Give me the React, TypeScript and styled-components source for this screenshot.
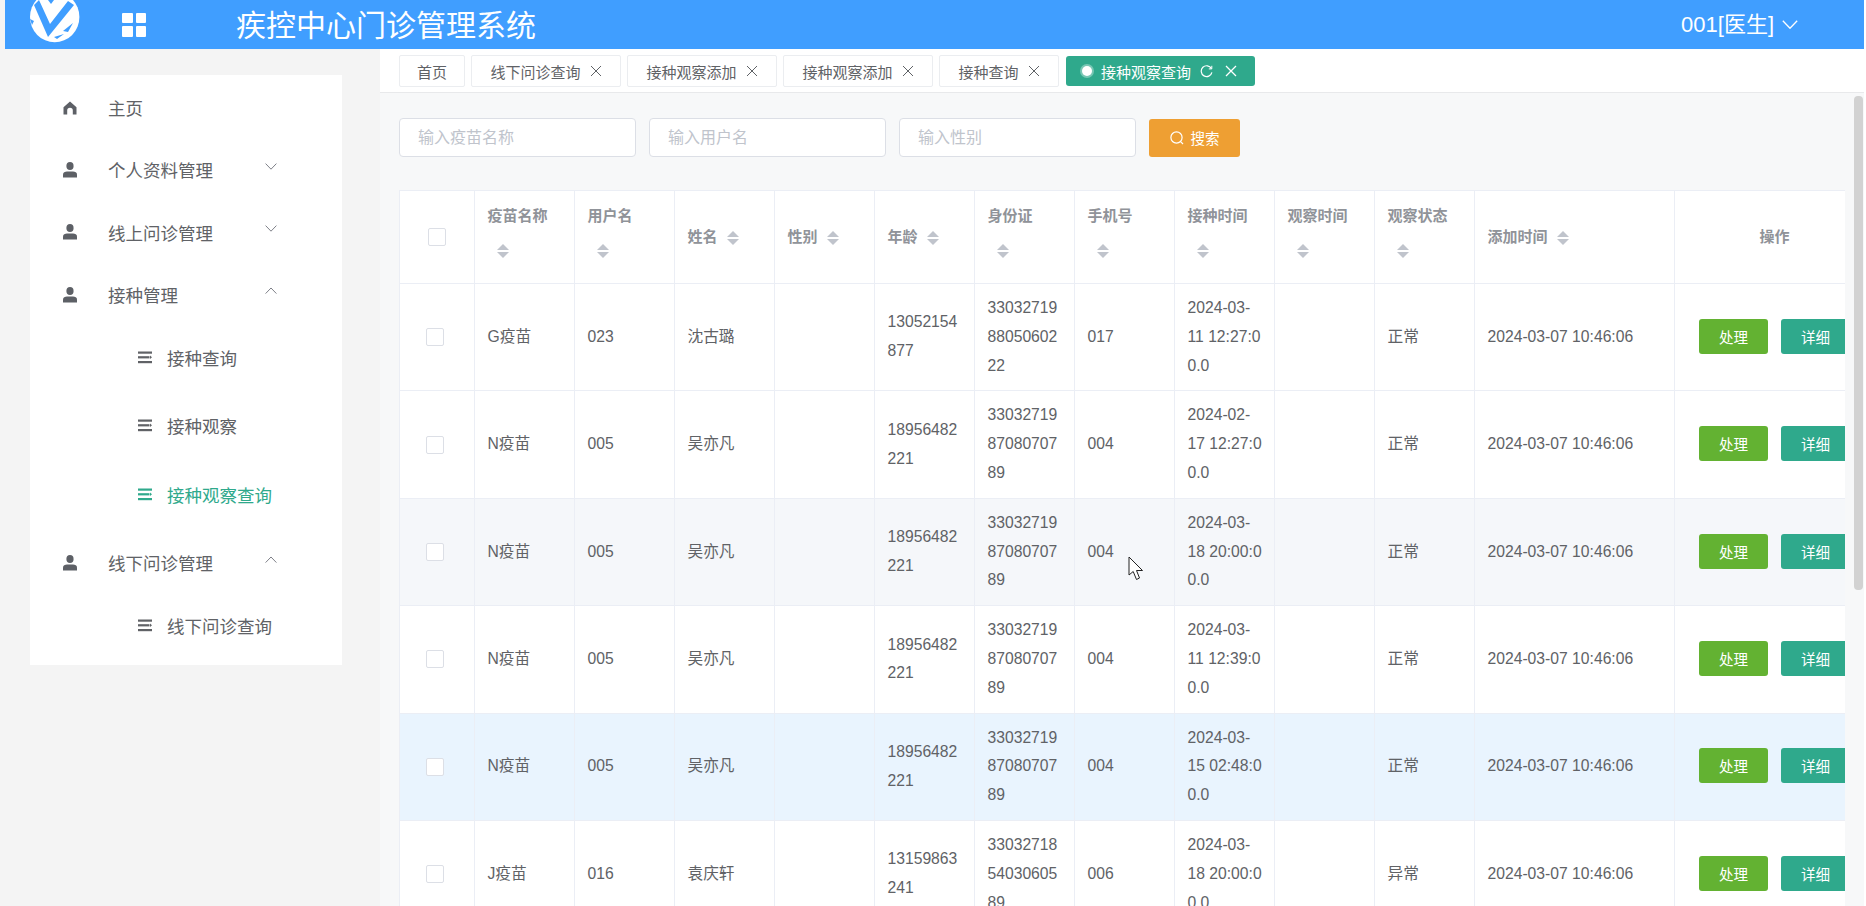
import React from "react";
import styled, { createGlobalStyle } from "styled-components";

const GlobalStyle = createGlobalStyle`
  html, body {
    margin: 0;
    padding: 0;
    height: 100%;
    overflow: hidden;
    background: #fff;
    font-family: "Liberation Sans", "Noto Sans CJK SC", sans-serif;
  }
  * { box-sizing: border-box; }
`;

const Root = styled.div`
  position: relative;
  width: 1866px;
  height: 906px;
  display: flex;
  flex-direction: column;
  border-left: 5px solid #f4f4f4;
  padding-right: 2px;
  overflow: hidden;
`;

const TopBar = styled.header`
  height: 49px;
  flex: none;
  display: flex;
  align-items: center;
  background: #409eff;
  color: #fff;
  overflow: hidden;
`;

const LogoWrap = styled.div`
  width: 117px;
  height: 49px;
  padding-left: 25px;
  display: flex;
  align-items: flex-start;
`;

const GridIcon = styled.div`
  width: 24px;
  height: 24px;
  display: grid;
  grid-template-columns: 1fr 1fr;
  grid-template-rows: 1fr 1fr;
  gap: 3px;
  margin-right: 90px;
  span {
    background: #fff;
    border-radius: 1px;
  }
`;

const Title = styled.div`
  flex: 1;
  font-size: 30px;
  line-height: 49px;
  padding-top: 2px;
`;

const UserMenu = styled.div`
  display: flex;
  align-items: center;
  gap: 8px;
  font-size: 22px;
  padding-right: 66px;
`;

const UserName = styled.span`
  margin-bottom: 6px;
`;

const Body = styled.div`
  flex: 1;
  display: flex;
  min-height: 0;
`;

const Sidebar = styled.aside`
  width: 375px;
  flex: none;
  background: #f4f4f4;
  padding: 26px 38px 0 25px;
`;

const MenuCard = styled.nav`
  background: #fff;
  padding: 1.5px 0 2.5px;
`;

const MenuRow = styled.div`
  height: 62.3px;
  display: flex;
  align-items: center;
  padding-left: 33px;
  font-size: 17.5px;
  color: #606266;
`;

const MenuIcon = styled.span`
  width: 14px;
  display: flex;
  margin-right: 31px;
  color: #5d6066;
`;

const MenuLabel = styled.span`
  flex: 1;
`;

const MenuArrow = styled.span`
  display: flex;
  margin: -7px 65px 0 0;
  color: #7d8088;
`;

const SubMenu = styled.div`
  margin: -2.5px 0 3px;
`;

const SubRow = styled.div<{ $active?: boolean }>`
  height: 68.5px;
  display: flex;
  align-items: center;
  padding-left: 108px;
  font-size: 17.5px;
  color: ${(p) => (p.$active ? "#2fa98c" : "#606266")};
`;

const SubIcon = styled.span`
  width: 14px;
  display: flex;
  margin-right: 15px;
`;

const Main = styled.main`
  flex: 1;
  min-width: 0;
  display: flex;
  flex-direction: column;
`;

const TabBar = styled.div`
  height: 44px;
  flex: none;
  background: #fff;
  border-bottom: 1px solid #e8e9eb;
  padding: 6px 0 0 19px;
  display: flex;
  align-items: flex-start;
  gap: 6px;
`;

const Tab = styled.div<{ $plain?: boolean }>`
  height: 32px;
  display: flex;
  align-items: center;
  gap: 9px;
  padding: 0 ${(p) => (p.$plain ? "17px" : "18.5px")};
  background: #fff;
  border: 1px solid #ebedf0;
  border-radius: 2px;
  font-size: 15px;
  color: #5f6266;
`;

const ActiveTab = styled.div`
  width: 189px;
  height: 30px;
  margin-top: 1px;
  margin-left: 1px;
  display: flex;
  align-items: center;
  padding: 0 18px 0 16px;
  background: #2fa98c;
  border-radius: 3px;
  font-size: 15px;
  color: #fff;
`;

const TabDot = styled.span`
  width: 10px;
  height: 10px;
  flex: none;
  border-radius: 50%;
  background: #fff;
  box-shadow: 0 0 0 2px rgba(255, 255, 255, 0.35);
  margin: 0 9px 0 0;
`;

const TabRefresh = styled.span`
  display: flex;
  margin: 0 12px 0 9px;
`;

const ContentRow = styled.div`
  flex: 1;
  min-height: 0;
  display: flex;
  background: #f7f8f9;
`;

const Scroller = styled.div`
  flex: 1;
  min-width: 0;
  overflow: hidden;
  padding: 25px 0 0 19px;
`;

const SearchRow = styled.div`
  display: flex;
  align-items: center;
  gap: 13px;
  margin-bottom: 33px;
`;

const SearchInput = styled.input`
  width: 237px;
  height: 39px;
  padding: 0 18px;
  border: 1px solid #dcdfe6;
  border-radius: 4px;
  background: #fff;
  font-family: inherit;
  font-size: 16px;
  outline: none;
  &::placeholder {
    color: #c0c4cc;
  }
`;

const SearchButton = styled.button`
  width: 91px;
  height: 38px;
  display: flex;
  align-items: center;
  justify-content: center;
  gap: 7px;
  border: 0;
  border-radius: 3px;
  background: #ee9f33;
  color: #fff;
  font-family: inherit;
  font-size: 14.5px;
`;

const TableWrap = styled.div`
  width: 1447px;
  overflow: hidden;
  background: #fff;
  border-top: 1px solid #ebeef5;
  border-left: 1px solid #ebeef5;
`;

const Table = styled.table`
  width: 1475px;
  table-layout: fixed;
  border-collapse: separate;
  border-spacing: 0;
`;

const Th = styled.th<{ $center?: boolean; $raised?: boolean }>`
  padding: ${(p) => (p.$raised ? "8px 12px 15px 12.5px" : "11px 12px 11px 12.5px")};
  ${(p) => p.$center && "padding-left: 0; padding-right: 0;"}
  border-right: 1px solid #ebeef5;
  border-bottom: 1px solid #ebeef5;
  text-align: ${(p) => (p.$center ? "center" : "left")};
  font-size: 15px;
  font-weight: 700;
  line-height: 34px;
  color: #909399;
  background: #fff;
`;

const SortCaret = styled.span`
  display: inline-flex;
  flex-direction: column;
  align-items: center;
  justify-content: center;
  gap: 2px;
  width: 30px;
  height: 34px;
  vertical-align: middle;
  &::before,
  &::after {
    content: "";
    width: 0;
    height: 0;
    border-left: 6px solid transparent;
    border-right: 6px solid transparent;
  }
  &::before {
    border-bottom: 6.5px solid #c0c4cc;
  }
  &::after {
    border-top: 6.5px solid #c0c4cc;
  }
`;

const Tr = styled.tr<{ $tone?: string }>`
  background: ${(p) => p.$tone || "#fff"};
`;

const Td = styled.td`
  padding: 10px 13px 10px 12.5px;
  border-right: 1px solid #ebeef5;
  border-bottom: 1px solid #ebeef5;
  font-size: 15.7px;
  line-height: 28.8px;
  color: #606266;
  overflow-wrap: anywhere;
`;

const TimeLine = styled.span`
  display: block;
  white-space: nowrap;
`;

const CheckCell = styled(Td)`
  padding: 0 4px 0 0;
  text-align: center;
  line-height: 0;
`;

const HeadCheckCell = styled(Th)`
  padding: 0;
  text-align: center;
  line-height: 0;
`;

const CheckBox = styled.span`
  display: inline-block;
  width: 18px;
  height: 18px;
  border: 1px solid #dcdfe6;
  border-radius: 2px;
  background: #fff;
  vertical-align: top;
`;

const ActionCell = styled(Td)`
  padding: 0 0 2px 24px;
  white-space: nowrap;
  line-height: 0;
`;

const ActionButton = styled.button<{ $color: string }>`
  width: 69px;
  height: 35px;
  margin-right: 13px;
  border: 0;
  border-radius: 3px;
  background: ${(p) => p.$color};
  color: #fff;
  font-family: inherit;
  font-size: 14.5px;
  vertical-align: top;
`;

const ScrollTrack = styled.div`
  width: 19px;
  flex: none;
  padding: 3px 1px 0 9px;
`;

const ScrollThumb = styled.div`
  height: 494px;
  border-radius: 4px;
  background: #d2d2d2;
`;

const Cursor = styled.svg`
  position: absolute;
  left: 1123px;
  top: 556px;
`;

const HomeIcon = () => (
  <svg width="14" height="14" viewBox="0 0 14 14" fill="currentColor">
    <path d="M7 0.5 L13.5 6.2 V13.5 H9.8 V9.6 A2.8 2.8 0 0 0 4.2 9.6 V13.5 H0.5 V6.2 Z" />
  </svg>
);

const UserIcon = () => (
  <svg width="14" height="16" viewBox="0 0 14 16" fill="currentColor">
    <ellipse cx="7" cy="4" rx="3.6" ry="4" />
    <path d="M0 15.5 V12.5 C0 10.5 2 9.6 4 9.6 H10 C12 9.6 14 10.5 14 12.5 V15.5 Z" />
  </svg>
);

const ListIcon = () => (
  <svg width="14" height="13" viewBox="0 0 14 13" fill="currentColor">
    <rect x="0" y="0.5" width="14" height="2.2" />
    <rect x="0" y="5.2" width="11.5" height="2.2" />
    <path d="M12 4.6 L14 6.3 L12 8 Z" />
    <rect x="0" y="10" width="14" height="2.2" />
  </svg>
);

const Chevron = ({ up, size = 12 }: { up?: boolean; size?: number }) => (
  <svg width={size} height={size * 0.6} viewBox="0 0 12 7.2" fill="none" stroke="currentColor" strokeWidth="1">
    <path d={up ? "M0.6 6.6 L6 1 L11.4 6.6" : "M0.6 0.6 L6 6.2 L11.4 0.6"} />
  </svg>
);

const CloseIcon = ({ strokeWidth = 1 }: { strokeWidth?: number }) => (
  <svg width="12" height="12" viewBox="0 0 12 12" fill="none" stroke="currentColor" strokeWidth={strokeWidth}>
    <path d="M1 1 L11 11 M11 1 L1 11" />
  </svg>
);

const RefreshIcon = () => (
  <svg width="13" height="13" viewBox="0 0 13 13" fill="none" stroke="currentColor" strokeWidth="1.2">
    <path d="M11.4 3.6 A5.4 5.4 0 1 0 11.9 7.4" />
    <path d="M11.8 0.8 V3.9 H8.8" strokeWidth="1" />
  </svg>
);

const SearchIcon = () => (
  <svg width="14" height="14" viewBox="0 0 14 14" fill="none" stroke="currentColor" strokeWidth="1.2">
    <circle cx="6.5" cy="6.5" r="5.6" />
    <path d="M10.6 10.6 L13 13" />
  </svg>
);

const Logo = () => (
  <svg width="50" height="43" viewBox="0 0 50 43">
    <ellipse cx="24.700" cy="17" rx="24.700" ry="25.300" fill="#fff" />
    <path d="M4 5 L18 37 L44 5 L38 1 L20 24 L9 0 Z" fill="#409eff" />
    <path d="M18 0 L21 4 L24 0 Z" fill="#409eff" />
    <path d="M33 31 L43 23 L38 32 Z M24 37 L34 34 L27 39 Z" fill="#409eff" />
    <path d="M0 19 L4 21 L2 25 Z" fill="#409eff" />
  </svg>
);

const CursorIcon = () => (
  <Cursor width="18" height="26" viewBox="0 0 18 26">
    <path
      d="M1 1 L1 19 L5.200 15.500 L8.500 23.500 L11.500 22 L8.500 14.500 L14.500 14.500 Z"
      fill="#fff"
      stroke="#222"
      strokeWidth="1"
    />
  </Cursor>
);

type Column = { label: string; width: number; single?: boolean };

const columns: Column[] = [
  { label: "疫苗名称", width: 100 },
  { label: "用户名", width: 100 },
  { label: "姓名", width: 100, single: true },
  { label: "性别", width: 100, single: true },
  { label: "年龄", width: 100, single: true },
  { label: "身份证", width: 100 },
  { label: "手机号", width: 100 },
  { label: "接种时间", width: 100 },
  { label: "观察时间", width: 100 },
  { label: "观察状态", width: 100 },
  { label: "添加时间", width: 200, single: true },
];

const TIME_COLUMN = 7;

const rows = [
  ["G疫苗", "023", "沈古璐", "", "13052154877", "330327198805060222", "017", "2024-03-11 12:27:00.0", "", "正常", "2024-03-07 10:46:06"],
  ["N疫苗", "005", "吴亦凡", "", "18956482221", "330327198708070789", "004", "2024-02-17 12:27:00.0", "", "正常", "2024-03-07 10:46:06"],
  ["N疫苗", "005", "吴亦凡", "", "18956482221", "330327198708070789", "004", "2024-03-18 20:00:00.0", "", "正常", "2024-03-07 10:46:06"],
  ["N疫苗", "005", "吴亦凡", "", "18956482221", "330327198708070789", "004", "2024-03-11 12:39:00.0", "", "正常", "2024-03-07 10:46:06"],
  ["N疫苗", "005", "吴亦凡", "", "18956482221", "330327198708070789", "004", "2024-03-15 02:48:00.0", "", "正常", "2024-03-07 10:46:06"],
  ["J疫苗", "016", "袁庆轩", "", "13159863241", "330327185403060589", "006", "2024-03-18 20:00:00.0", "", "异常", "2024-03-07 10:46:06"],
];

const rowTones: Record<number, string> = { 2: "#f5f7fa", 4: "#e9f4fe" };

const tabs = ["线下问诊查询", "接种观察添加", "接种观察添加", "接种查询"];

// the time column wraps as "2024-03-" / "11 12:27:0" / "0.0"
const renderTime = (value: string) => (
  <>
    <TimeLine>{value.slice(0, 8)}</TimeLine>
    <TimeLine>{value.slice(8, 18)}</TimeLine>
    <TimeLine>{value.slice(18)}</TimeLine>
  </>
);

export default function App() {
  return (
    <Root>
      <GlobalStyle />
      <TopBar>
        <LogoWrap>
          <Logo />
        </LogoWrap>
        <GridIcon>
          <span />
          <span />
          <span />
          <span />
        </GridIcon>
        <Title>疾控中心门诊管理系统</Title>
        <UserMenu>
          <UserName>001[医生]</UserName>
          <Chevron size={16} />
        </UserMenu>
      </TopBar>
      <Body>
        <Sidebar>
          <MenuCard>
            <MenuRow>
              <MenuIcon>
                <HomeIcon />
              </MenuIcon>
              <MenuLabel>主页</MenuLabel>
            </MenuRow>
            <MenuRow>
              <MenuIcon>
                <UserIcon />
              </MenuIcon>
              <MenuLabel>个人资料管理</MenuLabel>
              <MenuArrow>
                <Chevron />
              </MenuArrow>
            </MenuRow>
            <MenuRow>
              <MenuIcon>
                <UserIcon />
              </MenuIcon>
              <MenuLabel>线上问诊管理</MenuLabel>
              <MenuArrow>
                <Chevron />
              </MenuArrow>
            </MenuRow>
            <MenuRow>
              <MenuIcon>
                <UserIcon />
              </MenuIcon>
              <MenuLabel>接种管理</MenuLabel>
              <MenuArrow>
                <Chevron up />
              </MenuArrow>
            </MenuRow>
            <SubMenu>
              <SubRow>
                <SubIcon>
                  <ListIcon />
                </SubIcon>
                接种查询
              </SubRow>
              <SubRow>
                <SubIcon>
                  <ListIcon />
                </SubIcon>
                接种观察
              </SubRow>
              <SubRow $active>
                <SubIcon>
                  <ListIcon />
                </SubIcon>
                接种观察查询
              </SubRow>
            </SubMenu>
            <MenuRow>
              <MenuIcon>
                <UserIcon />
              </MenuIcon>
              <MenuLabel>线下问诊管理</MenuLabel>
              <MenuArrow>
                <Chevron up />
              </MenuArrow>
            </MenuRow>
            <SubMenu>
              <SubRow>
                <SubIcon>
                  <ListIcon />
                </SubIcon>
                线下问诊查询
              </SubRow>
            </SubMenu>
          </MenuCard>
        </Sidebar>
        <Main>
          <TabBar>
            <Tab $plain>首页</Tab>
            {tabs.map((t, i) => (
              <Tab key={i}>
                {t}
                <CloseIcon />
              </Tab>
            ))}
            <ActiveTab>
              <TabDot />
              接种观察查询
              <TabRefresh>
                <RefreshIcon />
              </TabRefresh>
              <CloseIcon strokeWidth={1.3} />
            </ActiveTab>
          </TabBar>
          <ContentRow>
            <Scroller>
              <SearchRow>
                <SearchInput placeholder="输入疫苗名称" />
                <SearchInput placeholder="输入用户名" />
                <SearchInput placeholder="输入性别" />
                <SearchButton>
                  <SearchIcon />
                  搜索
                </SearchButton>
              </SearchRow>
              <TableWrap>
                <Table>
                  <colgroup>
                    <col width={75} />
                    {columns.map((c) => (
                      <col key={c.label} width={c.width} />
                    ))}
                    <col width={200} />
                  </colgroup>
                  <thead>
                    <tr>
                      <HeadCheckCell>
                        <CheckBox />
                      </HeadCheckCell>
                      {columns.map((c) => (
                        <Th key={c.label} $raised={!c.single}>
                          {c.label}
                          <SortCaret />
                        </Th>
                      ))}
                      <Th $center>操作</Th>
                    </tr>
                  </thead>
                  <tbody>
                    {rows.map((row, i) => (
                      <Tr key={i} $tone={rowTones[i]}>
                        <CheckCell>
                          <CheckBox />
                        </CheckCell>
                        {row.map((cell, j) => (
                          <Td key={j}>{j === TIME_COLUMN ? renderTime(cell) : cell}</Td>
                        ))}
                        <ActionCell>
                          <ActionButton $color="#63b232">处理</ActionButton>
                          <ActionButton $color="#2fa98c">详细</ActionButton>
                        </ActionCell>
                      </Tr>
                    ))}
                  </tbody>
                </Table>
              </TableWrap>
            </Scroller>
            <ScrollTrack>
              <ScrollThumb />
            </ScrollTrack>
          </ContentRow>
        </Main>
      </Body>
      <CursorIcon />
    </Root>
  );
}
